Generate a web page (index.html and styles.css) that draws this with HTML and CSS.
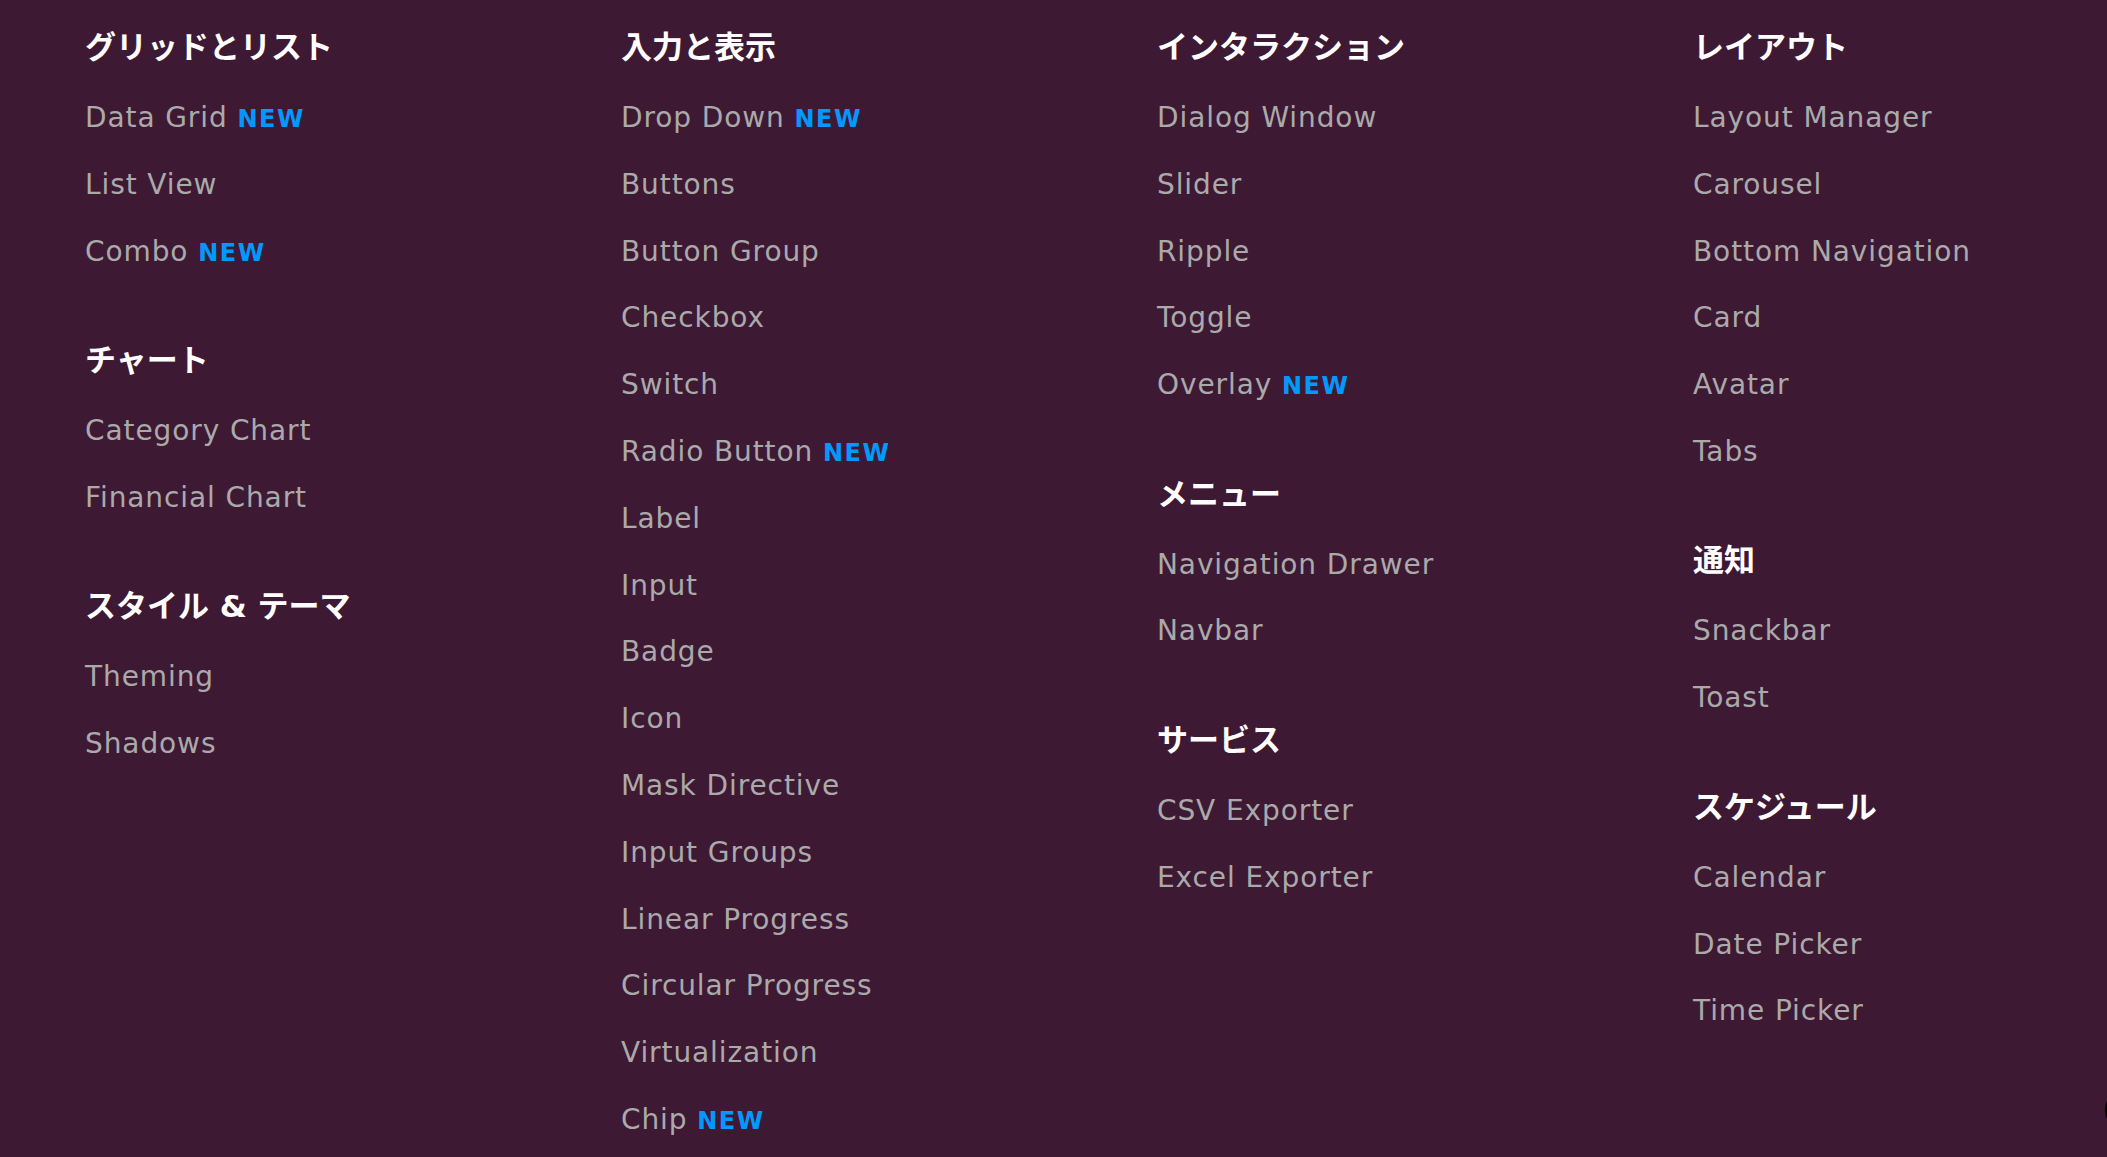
FILE: index.html
```html
<!DOCTYPE html>
<html lang="ja">
   <head>
      <meta charset="UTF-8">
      <meta name="viewport" content="width=device-width, initial-scale=1.0">
      <title>コンポーネント</title>
      <link rel="stylesheet" href="styles.css">
   </head>
   <body>
      <div class="menu">
         <div class="col">
            <section class="group">
               <h3>グリッドとリスト</h3>
               <ul>
                  <li><a href="#">Data Grid <span class="new">NEW</span></a></li>
                  <li><a href="#">List View</a></li>
                  <li><a href="#">Combo <span class="new">NEW</span></a></li>
               </ul>
            </section>
            <section class="group">
               <h3>チャート</h3>
               <ul>
                  <li><a href="#">Category Chart</a></li>
                  <li><a href="#">Financial Chart</a></li>
               </ul>
            </section>
            <section class="group">
               <h3>スタイル &amp; テーマ</h3>
               <ul>
                  <li><a href="#">Theming</a></li>
                  <li><a href="#">Shadows</a></li>
               </ul>
            </section>
         </div>
         <div class="col">
            <section class="group">
               <h3>入力と表示</h3>
               <ul>
                  <li><a href="#">Drop Down <span class="new">NEW</span></a></li>
                  <li><a href="#">Buttons</a></li>
                  <li><a href="#">Button Group</a></li>
                  <li><a href="#">Checkbox</a></li>
                  <li><a href="#">Switch</a></li>
                  <li><a href="#">Radio Button <span class="new">NEW</span></a></li>
                  <li><a href="#">Label</a></li>
                  <li><a href="#">Input</a></li>
                  <li><a href="#">Badge</a></li>
                  <li><a href="#">Icon</a></li>
                  <li><a href="#">Mask Directive</a></li>
                  <li><a href="#">Input Groups</a></li>
                  <li><a href="#">Linear Progress</a></li>
                  <li><a href="#">Circular Progress</a></li>
                  <li><a href="#">Virtualization</a></li>
                  <li><a href="#">Chip <span class="new">NEW</span></a></li>
               </ul>
            </section>
         </div>
         <div class="col">
            <section class="group">
               <h3>インタラクション</h3>
               <ul>
                  <li><a href="#">Dialog Window</a></li>
                  <li><a href="#">Slider</a></li>
                  <li><a href="#">Ripple</a></li>
                  <li><a href="#">Toggle</a></li>
                  <li><a href="#">Overlay <span class="new">NEW</span></a></li>
               </ul>
            </section>
            <section class="group">
               <h3>メニュー</h3>
               <ul>
                  <li><a href="#">Navigation Drawer</a></li>
                  <li><a href="#">Navbar</a></li>
               </ul>
            </section>
            <section class="group">
               <h3>サービス</h3>
               <ul>
                  <li><a href="#">CSV Exporter</a></li>
                  <li><a href="#">Excel Exporter</a></li>
               </ul>
            </section>
         </div>
         <div class="col">
            <section class="group">
               <h3>レイアウト</h3>
               <ul>
                  <li><a href="#">Layout Manager</a></li>
                  <li><a href="#">Carousel</a></li>
                  <li><a href="#">Bottom Navigation</a></li>
                  <li><a href="#">Card</a></li>
                  <li><a href="#">Avatar</a></li>
                  <li><a href="#">Tabs</a></li>
               </ul>
            </section>
            <section class="group">
               <h3>通知</h3>
               <ul>
                  <li><a href="#">Snackbar</a></li>
                  <li><a href="#">Toast</a></li>
               </ul>
            </section>
            <section class="group">
               <h3>スケジュール</h3>
               <ul>
                  <li><a href="#">Calendar</a></li>
                  <li><a href="#">Date Picker</a></li>
                  <li><a href="#">Time Picker</a></li>
               </ul>
            </section>
         </div>
      </div>
      <div class="fab"></div>
   </body>
</html>
```

FILE: styles.css
```css
body,html{
   margin:0;
   padding:0;
}
body{
   background:#3e1934;
   font-family:"DejaVu Sans", Verdana, sans-serif;
}
.menu{
   display:grid;
   grid-template-columns:536px 536px 536px 1fr;
   padding:24px 0 0 85px;
}
.group{
   margin-bottom:51.7px;
}
.group:last-child{
   margin-bottom:0;
}
.group h3{
   margin:0 0 18px;
   padding-top:3px;
   font-family:"DejaVu Sans", "Noto Sans CJK JP", sans-serif;
   font-size:31px;
   font-weight:bold;
   line-height:40px;
   color:#fff;
}
.group ul{
   list-style:none;
   margin:0;
   padding:0;
}
.group li{
   height:66.8px;
   line-height:66.8px;
   font-size:28px;
   letter-spacing:0.9px;
   white-space:nowrap;
}
.group a{
   color:#aaa;
   text-decoration:none;
}
.new{
   color:#0099ff;
   font-size:24px;
   font-weight:bold;
   letter-spacing:1.5px;
}
.fab{
   position:fixed;
   top:1088px;
   right:-42px;
   width:44px;
   height:44px;
   border-radius:50%;
   background:#000;
}
```
